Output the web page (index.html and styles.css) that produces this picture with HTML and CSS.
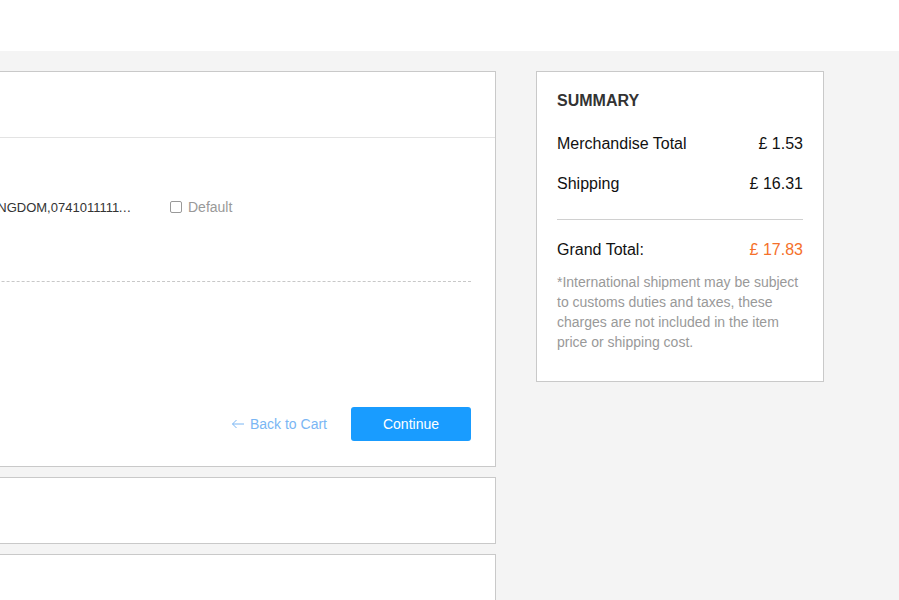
FILE: index.html
```html
<!DOCTYPE html>
<html>
<head>
<meta charset="utf-8">
<link rel="stylesheet" href="styles.css">
</head>
<body>
<header class="topbar"></header>
<main class="page">
  <div class="layout">
    <div class="main-col">
      <section class="card address-card">
        <div class="card-head"></div>
        <div class="card-body">
          <div class="address-row">
            <span class="address-text">Tom Smith,London,UNITED KINGDOM,07410111111 12 High Street</span>
            <label class="default-check"><span class="box"></span>Default</label>
          </div>
          <div class="dashed"></div>
          <div class="actions">
            <a class="back-link" href="#">
              <svg width="14" height="10" viewBox="0 0 14 10" class="arrow"><path d="M13 5H1.5M5.5 1L1.5 5l4 4" fill="none" stroke="#7ab6f4" stroke-width="1"/></svg>
              Back to Cart
            </a>
            <button class="continue">Continue</button>
          </div>
        </div>
      </section>
      <section class="card small-card"></section>
      <section class="card tail-card"></section>
    </div>
    <aside class="summary">
      <h2 class="summary-title">SUMMARY</h2>
      <div class="row first"><span>Merchandise Total</span><span>£ 1.53</span></div>
      <div class="row"><span>Shipping</span><span>£ 16.31</span></div>
      <div class="divider"></div>
      <div class="row total"><span>Grand Total:</span><span class="price">£ 17.83</span></div>
      <p class="note">*International shipment may be subject to customs duties and taxes, these charges are not included in the item price or shipping cost.</p>
    </aside>
  </div>
</main>
</body>
</html>
```
FILE: styles.css
```css
* { box-sizing: border-box; }
html, body { margin: 0; padding: 0; }
body {
  font-family: "Liberation Sans", Arial, sans-serif;
  background: #f4f4f4;
  color: #333;
  overflow: hidden;
  height: 600px;
}
.topbar { height: 51px; background: #fff; }
.page { padding-top: 20px; height: 549px; overflow: hidden; }
.layout {
  display: flex;
  gap: 40px;
  margin-left: -205px;
  align-items: flex-start;
}
.main-col { width: 701px; display: flex; flex-direction: column; gap: 10px; }
.card { background: #fff; border: 1px solid #c9c9c9; }
.card-head { height: 66px; border-bottom: 1px solid #e3e3e3; }
.card-body { padding: 0 24px 25px 25px; }
.address-row {
  display: flex;
  align-items: center;
  height: 24px;
  margin-top: 57px;
}
.address-text {
  font-size: 13px;
  color: #333;
  width: 312px;
  white-space: nowrap;
  overflow: hidden;
  text-overflow: ellipsis;
  margin-right: 37px;
}
.default-check { display: flex; align-items: center; font-size: 14px; color: #999; }
.box {
  width: 12px; height: 12px;
  border: 1px solid #999;
  border-radius: 2px;
  margin-right: 6px;
  background: #fff;
}
.dashed { border-top: 1px dashed #c8c8c8; margin-top: 62px; }
.actions {
  display: flex;
  justify-content: flex-end;
  align-items: center;
  margin-top: 125px;
  gap: 24px;
}
.back-link {
  color: #7ab6f4;
  text-decoration: none;
  font-size: 14px;
  display: flex;
  align-items: center;
  gap: 5px;
}
.continue {
  width: 120px;
  height: 34px;
  background: #199cff;
  border: none;
  border-radius: 3px;
  color: #fff;
  font-size: 14px;
  font-family: inherit;
}
.small-card { height: 67px; }
.tail-card { height: 80px; }
.summary {
  width: 288px;
  background: #fff;
  border: 1px solid #c9c9c9;
  padding: 20px 20px 29px;
}
.summary-title { font-size: 16px; font-weight: bold; line-height: 18px; margin: 0; color: #333; }
.row {
  display: flex;
  justify-content: space-between;
  font-size: 16px;
  line-height: 20px;
  color: #111;
  margin-top: 20px;
}
.row.first { margin-top: 24px; }
.divider { border-top: 1px solid #d0d0d0; margin-top: 25px; }
.row.total { margin-top: 20px; }
.price { color: #f5702a; }
.note { margin: 12px 0 0; font-size: 14px; line-height: 20px; color: #999; }
```
